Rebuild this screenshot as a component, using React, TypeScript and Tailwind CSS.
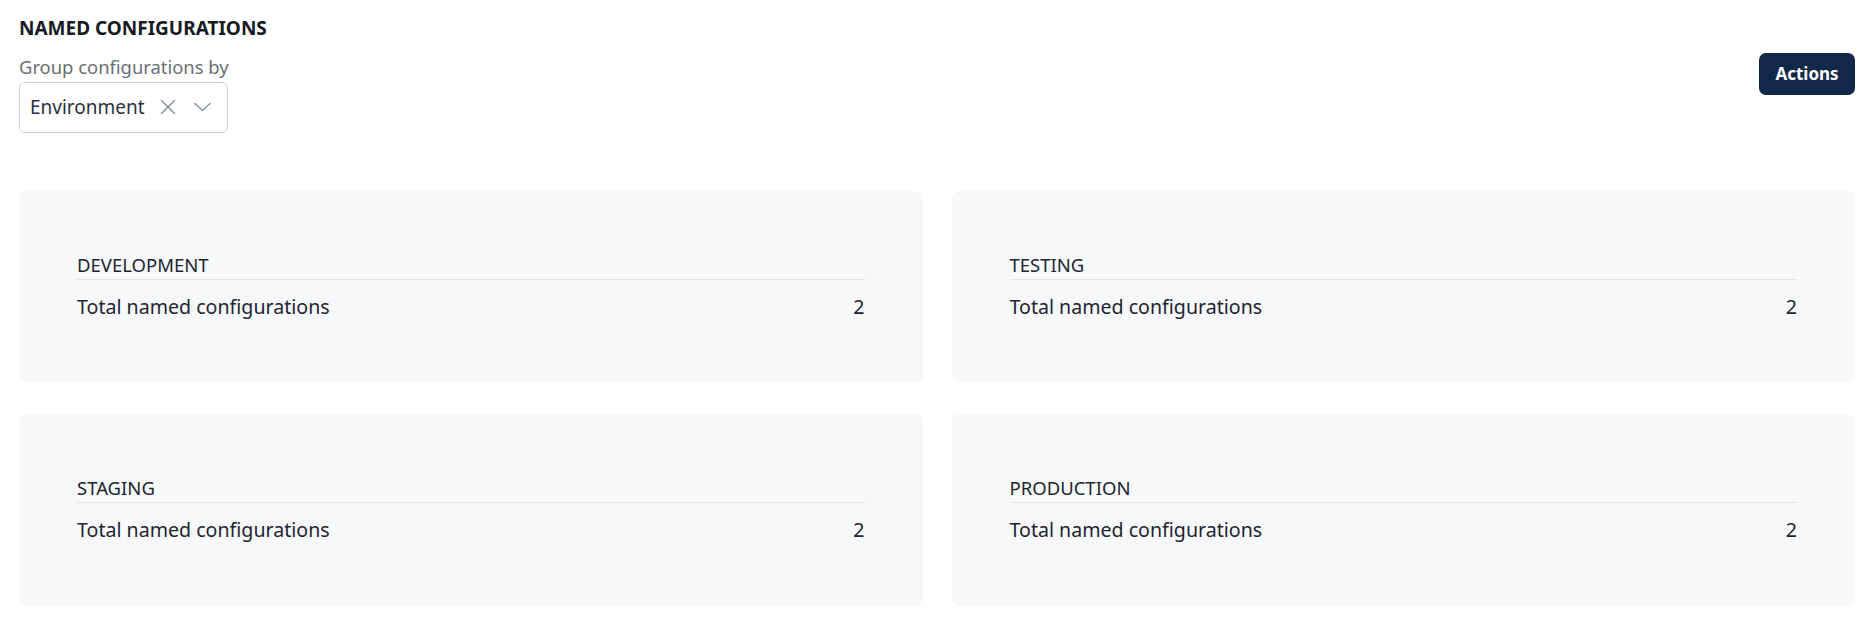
import React from "react";

const groups = ["DEVELOPMENT", "TESTING", "STAGING", "PRODUCTION"];

function GroupCard({ name, total }: { name: string; total: number }) {
  return (
    <div className="h-[192px] rounded-[8px] bg-[#f7f8fa] px-[58px] pt-[60px]">
      <div className="border-b border-[#e2e4e8] text-[18.5px] leading-[28px] text-[#1f2430]">
        {name}
      </div>
      <div className="mt-[13px] flex justify-between text-[19.6px] leading-[28px] text-[#1f2430]">
        <span>Total named configurations</span>
        <span>{total}</span>
      </div>
    </div>
  );
}

export default function App() {
  return (
    <div className="min-h-screen bg-white pl-[19px] pr-[14px] pt-[14px] font-['Noto_Sans',sans-serif]">
      <h2 className="text-[19px] font-bold leading-[28px] text-[#151a23]">NAMED CONFIGURATIONS</h2>
      <div className="mt-[11px] flex items-start justify-between">
        <div>
          <label className="block text-[18.4px] leading-[28px] text-[#6b6f76]">Group configurations by</label>
          <div className="mt-[1px] flex h-[51px] w-[209px] items-center rounded-[6px] border border-[#c9d2df] bg-white pb-[2px] pl-[10px] pr-[16px]">
            <span className="flex-1 text-[19px] leading-[28px] text-[#2b3140]">Environment</span>
            <svg width="16" height="16" viewBox="0 0 16 16" className="mr-[18px] text-[#8b95a7]" fill="none" stroke="currentColor" strokeWidth="1.6" strokeLinecap="round">
              <path d="M1.5 1.5 L14.5 14.5 M14.5 1.5 L1.5 14.5" />
            </svg>
            <svg width="17" height="10" viewBox="0 0 17 10" className="text-[#8b95a7]" fill="none" stroke="currentColor" strokeWidth="1.6" strokeLinecap="round" strokeLinejoin="round">
              <path d="M1 1.5 L8.5 8.5 L16 1.5" />
            </svg>
          </div>
        </div>
        <button className="h-[42px] w-[96px] rounded-[7px] bg-[#12284a] text-[17px] font-bold text-white">
          Actions
        </button>
      </div>
      <div className="mt-[58px] grid grid-cols-2 gap-x-[29px] gap-y-[31px]">
        {groups.map((g) => (
          <GroupCard key={g} name={g} total={2} />
        ))}
      </div>
    </div>
  );
}
